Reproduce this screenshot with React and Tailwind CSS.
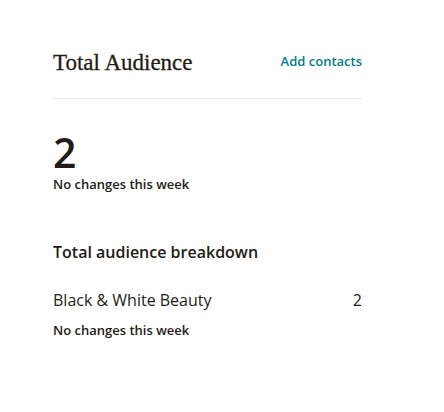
export default function App() {
  return (
    <div className="w-[444px] h-[412px] bg-white text-[#241c15]" style={{ fontFamily: '"Open Sans", "Liberation Sans", sans-serif' }}>
      <div className="pl-[53px] pr-[82px] pt-[46px]">
        <div className="flex items-center justify-between h-[32px]">
          <h1 className="text-[23px] leading-none [-webkit-text-stroke:0.3px_#241c15]" style={{ fontFamily: '"Liberation Serif", "DejaVu Serif", serif' }}>Total Audience</h1>
          <a className="text-[13px] font-semibold text-[#007c89]">Add contacts</a>
        </div>
        <div className="mt-[20px] border-t border-[#e8e8e8]" />
        <div className="mt-[36px] text-[41px] font-semibold leading-[35px]">2</div>
        <div className="mt-[7px] text-[13px] font-semibold leading-[14px]">No changes this week</div>
        <div className="mt-[50px] text-[16px] font-semibold leading-[22px]">Total audience breakdown</div>
        <div className="mt-[26px] flex justify-between text-[16px] leading-[22px]">
          <span>Black &amp; White Beauty</span>
          <span>2</span>
        </div>
        <div className="mt-[10px] text-[13px] font-semibold leading-[18px]">No changes this week</div>
      </div>
    </div>
  );
}
